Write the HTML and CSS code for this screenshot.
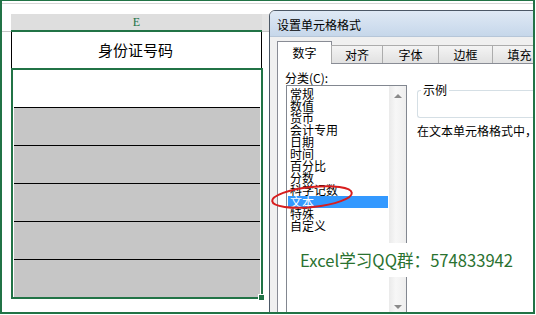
FILE: index.html
```html
<!DOCTYPE html>
<html lang="zh-CN">
<head>
<meta charset="utf-8">
<title>设置单元格格式</title>
<link rel="stylesheet" href="styles.css">
</head>
<body>
<div class="frame">
  <div class="sheet">
    <div class="topstrip"></div>
    <div class="headrow">
      <div class="corner"></div>
      <div class="colhead">E</div>
      <div class="colrest"></div>
    </div>
    <div class="row1">
      <div class="corner-blank"></div>
      <div class="cell-title">身份证号码</div>
    </div>
    <div class="selrow">
      <div class="corner-blank"></div>
      <div class="selection">
        <div class="cell white"></div>
        <div class="cell grey"></div>
        <div class="cell grey"></div>
        <div class="cell grey"></div>
        <div class="cell grey"></div>
        <div class="cell grey last"></div>
        <span class="handle"></span>
      </div>
    </div>
  </div>

  <div class="dialog">
    <div class="titlebar">设置单元格格式</div>
    <div class="dbody">
      <div class="tabs">
        <div class="tab active">数字</div>
        <div class="tab w51">对齐</div>
        <div class="tab w56">字体</div>
        <div class="tab">边框</div>
        <div class="tab">填充</div>
      </div>
      <div class="panel">
        <div class="leftcol">
          <div class="label">分类(<u>C</u>):</div>
          <div class="listbox">
            <ul class="items">
              <li>常规</li>
              <li>数值</li>
              <li>货币</li>
              <li>会计专用</li>
              <li>日期</li>
              <li>时间</li>
              <li>百分比</li>
              <li>分数</li>
              <li>科学记数</li>
              <li class="sel">文本</li>
              <li>特殊</li>
              <li>自定义</li>
            </ul>
            <div class="scrollbar">
              <span class="arrow up"></span>
              <span class="arrow down"></span>
            </div>
          </div>
        </div>
        <div class="rightcol">
          <fieldset class="sample">
            <legend>示例</legend>
          </fieldset>
          <div class="desc">在文本单元格格式中，</div>
        </div>
      </div>
    </div>
  </div>

  <svg class="ring" width="96" height="34" viewBox="0 0 96 34">
    <ellipse cx="44" cy="15" rx="40" ry="10" transform="rotate(-6 44 15)" fill="none" stroke="#d81e1e" stroke-width="2"/>
  </svg>

  <div class="watermark">Excel学习QQ群：574833942</div>
</div>
</body>
</html>
```

FILE: styles.css
```css
* { box-sizing: border-box; }
html, body { margin: 0; padding: 0; background: #ffffff; }
body {
  font-family: "Noto Sans CJK SC", "Noto Sans", sans-serif;
  font-size: 12px;
  color: #000;
}
.frame {
  position: relative;
  width: 535px;
  height: 314px;
  border: 2px solid #217346;
  border-top-width: 1px;
  overflow: hidden;
  background: #fff;
}

/* spreadsheet */
.sheet { display: flex; flex-direction: column; }
.topstrip {
  height: 3px;
  border-bottom: 1px solid #d6d6d6;
  margin-bottom: 10px;
}
.headrow { display: flex; height: 18px; }
.corner { width: 9px; border-bottom: 1px solid #c6c6c6; background: #fff; }
.colhead {
  width: 251px;
  background: #dedede;
  border-bottom: 2px solid #217346;
  color: #217346;
  font-family: "Liberation Serif", "DejaVu Serif", serif;
  font-size: 12px;
  line-height: 16px;
  text-align: center;
}
.colrest { flex: 1; background: #e4e4e4; border-bottom: 1px solid #c6c6c6; }

.row1 { display: flex; height: 36px; }
.corner-blank { width: 9px; flex: none; }
.cell-title {
  width: 251px;
  border-left: 1px solid #000;
  border-right: 1px solid #000;
  font-size: 15px;
  line-height: 36px;
  text-align: center;
  padding-right: 2px;
}
.selrow { display: flex; }
.selection {
  position: relative;
  width: 252px;
  border: 2px solid #217346;
  padding: 0 1px;
  background: #fff;
}
.cell { height: 38px; border-bottom: 1px solid #000; }
.cell.white { background: #fff; }
.cell.grey { background: #c6c6c6; }
.cell.last { height: 37px; border-bottom: 0; }
.handle {
  position: absolute;
  right: -4px;
  bottom: -4px;
  width: 7px;
  height: 7px;
  background: #217346;
  border: 1px solid #fff;
}

/* dialog */
.dialog {
  position: absolute;
  left: 267px;
  top: 9px;
  width: 300px;
  height: 320px;
  border: 1px solid #4c5866;
  border-radius: 6px 6px 0 0;
  background: #f0f0f0;
  overflow: hidden;
}
.titlebar {
  height: 26px;
  padding-left: 7px;
  line-height: 27px;
  font-size: 12px;
  background: linear-gradient(#dfe9f5, #c6d7ea);
  border-bottom: 1px solid #b6c6d8;
}
.dbody { padding: 4px 0 0 7px; }
.tabs { display: flex; align-items: flex-end; height: 22px; position: relative; z-index: 1; }
.tab {
  width: 55px;
  height: 18px;
  line-height: 17px;
  text-align: center;
  font-size: 12px;
  background: linear-gradient(#f4f4f4, #e1e1e1);
  border: 1px solid #acacac;
  border-bottom: 0;
  margin-left: -1px;
}
.tab.w51 { width: 52px; }
.tab.w56 { width: 57px; }
.tab.active {
  height: 23px;
  margin-left: 0;
  margin-bottom: -1px;
  background: #fff;
  border-color: #898c95;
  line-height: 22px;
}
.panel {
  display: flex;
  gap: 10px;
  height: 260px;
  background: #fff;
  border-top: 1px solid #898c95;
  border-left: 1px solid #898c95;
  padding-left: 8px;
}
.leftcol { width: 121px; flex: none; }
.label {
  margin-top: 7px;
  margin-left: -1px;
  height: 14px;
  line-height: 13px;
  font-size: 12px;
}
.label u { text-decoration: none; }
.listbox {
  display: flex;
  height: 231px;
  border: 1px solid #828790;
}
.items {
  list-style: none;
  margin: 0;
  padding: 2px 0 0 1px;
  flex: 1;
}
.items li {
  height: 12px;
  line-height: 12px;
  font-size: 12px;
  padding-left: 2px;
  width: 100px;
  white-space: nowrap;
}
.items li.sel { background: #3399ff; color: #fff; }
.scrollbar {
  width: 17px;
  flex: none;
  background: linear-gradient(90deg, #eaeaea, #f7f7f7 40%, #eeeeee);
  display: flex;
  flex-direction: column;
  justify-content: space-between;
  align-items: center;
  padding: 8px 0 6px;
}
.arrow { width: 0; height: 0; border-left: 4px solid transparent; border-right: 4px solid transparent; }
.arrow.up { border-bottom: 4px solid #8a8a8a; }
.arrow.down { border-top: 4px solid #8a8a8a; }

.rightcol { flex: 1; padding-top: 20px; }
.sample {
  margin: 0;
  padding: 0;
  height: 34px;
  border: 1px solid #d5dfe5;
  border-right: 0;
  border-radius: 3px 0 0 3px;
  min-width: 0;
}
.sample legend {
  padding: 0 2px;
  margin-left: 3px;
  font-size: 12px;
  line-height: 12px;
}
.desc {
  margin-top: 7px;
  line-height: 12px;
  font-size: 12px;
  white-space: nowrap;
}

/* overlays */
.ring { position: absolute; left: 266px; top: 181px; }
.watermark {
  position: absolute;
  left: 294px;
  top: 242px;
  height: 34px;
  padding: 0 4px;
  line-height: 34px;
  background: #fff;
  color: #2a7230;
  font-size: 16.6px;
  white-space: nowrap;
}
```
